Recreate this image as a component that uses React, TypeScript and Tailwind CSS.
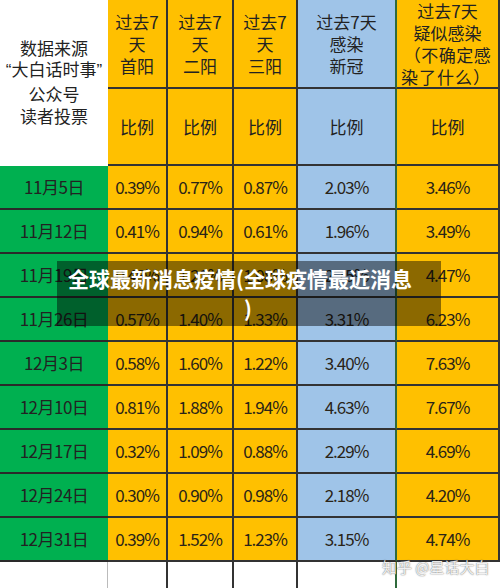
import React from 'react';

const rows = [
  { date: '11月5日', v: ['0.39%', '0.77%', '0.87%', '2.03%', '3.46%'] },
  { date: '11月12日', v: ['0.41%', '0.94%', '0.61%', '1.96%', '3.49%'] },
  { date: '11月19日', v: ['0.46%', '1.21%', '1.08%', '2.75%', '4.47%'] },
  { date: '11月26日', v: ['0.57%', '1.40%', '1.33%', '3.31%', '6.23%'] },
  { date: '12月3日', v: ['0.58%', '1.60%', '1.22%', '3.40%', '7.63%'] },
  { date: '12月10日', v: ['0.81%', '1.88%', '1.94%', '4.63%', '7.67%'] },
  { date: '12月17日', v: ['0.32%', '1.09%', '0.88%', '2.29%', '4.69%'] },
  { date: '12月24日', v: ['0.30%', '0.90%', '0.98%', '2.18%', '4.20%'] },
  { date: '12月31日', v: ['0.39%', '1.52%', '1.23%', '3.15%', '4.74%'] },
];

const headers: string[][] = [
  ['过去7', '天', '首阳'],
  ['过去7', '天', '二阳'],
  ['过去7', '天', '三阳'],
  ['过去7天', '感染', '新冠'],
  ['过去7天', '疑似感染', '（不确定感', '染了什么）'],
];

// per column: background + right border
const colStyle = [
  'bg-[#ffc000] border-r-2 border-[#333]',
  'bg-[#ffc000] border-r-2 border-[#333]',
  'bg-[#ffc000] border-r-2 border-[#333]',
  'bg-[#9fc4e8] border-r-2 border-r-[#2f6a3c] border-b-[#333]',
  'bg-[#ffc000] border-r-2 border-[#333]',
];

export default function App() {
  return (
    <div className="relative w-[500px] h-[588px] overflow-hidden bg-white text-[#222] font-['Noto_Sans_CJK_SC',sans-serif]">
      <div className="grid grid-cols-[108px_60px_66px_64px_99px_103px] grid-rows-[89px_77px_repeat(9,44px)_40px]">
        {/* header */}
        <div className="row-span-2 bg-white flex flex-col items-center justify-center text-[17px] leading-[22.7px] pb-[1px]">
          <span>数据来源</span>
          <span className="font-['Liberation_Sans','Noto_Sans_CJK_SC',sans-serif]">“大白话时事”</span>
          <span>公众号</span>
          <span>读者投票</span>
        </div>
        {headers.map((h, i) => (
          <div
            key={i}
            className={`${colStyle[i]} border-b-2 flex flex-col items-center justify-center text-[17px] leading-[22px] ${i === 4 ? 'pt-[1px]' : ''}`}
          >
            {h.map((line, j) => (
              <span key={j} className={i === 4 && j === 3 ? 'self-start pl-[4px] tracking-[1px] whitespace-nowrap' : i === 4 && j === 2 ? 'tracking-[0.5px] whitespace-nowrap' : 'whitespace-nowrap'}>
                {line}
              </span>
            ))}
          </div>
        ))}
        {headers.map((_, i) => (
          <div key={i} className={`${colStyle[i]} border-b-2 flex items-center justify-center text-[17px]`}>
            比例
          </div>
        ))}

        {/* data */}
        {rows.map((r) => (
          <React.Fragment key={r.date}>
            <div className="bg-[#00b050] border-b-2 border-[#2a2a2a] flex items-center justify-center text-[17px] tracking-[-0.5px]">
              {r.date}
            </div>
            {r.v.map((val, i) => (
              <div
                key={i}
                className={`${colStyle[i]} border-b-2 flex items-center justify-center text-[17px] tracking-[-1px] text-[#2a2418]`}
              >
                {val}
              </div>
            ))}
          </React.Fragment>
        ))}

        {/* partly visible empty row */}
        <div className="bg-white border-r border-[#bbb]" />
        <div className="bg-white border-r-2 border-[#333]" />
        <div className="bg-white border-r-2 border-[#333]" />
        <div className="bg-white border-r-2 border-[#333]" />
        <div className="bg-white border-r-2 border-[#2f6a3c]" />
        <div className="bg-white" />
      </div>

      {/* title overlay */}
      <div className="absolute left-[57px] top-[261px] w-[384px] h-[65px] bg-black/45 pt-[2px] text-white font-bold text-[21px] leading-[30px]">
        <div className="pl-[11px] whitespace-nowrap">全球最新消息疫情(全球疫情最近消息</div>
        <div className="pl-[187px]">)</div>
      </div>

      {/* watermark */}
      <div className="absolute left-[382px] top-[557px] text-[15px] leading-[20px] text-white/90 [text-shadow:0_0_1px_rgba(0,0,0,0.55),0_0_2px_rgba(0,0,0,0.3)] whitespace-nowrap">
        知乎 @星话大白
      </div>
    </div>
  );
}
